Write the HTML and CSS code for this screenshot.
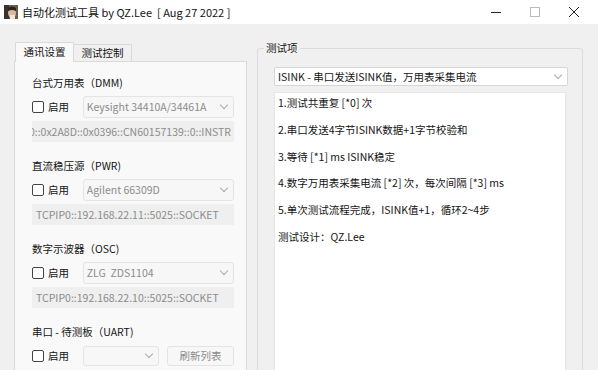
FILE: index.html
```html
<!DOCTYPE html>
<html lang="zh-CN">
<head>
    <meta charset="UTF-8">
    <title>自动化测试工具 by QZ.Lee</title>
    <link rel="stylesheet" href="styles.css">
</head>
<body>
    <div class="window">
        <!-- Title bar -->
        <div class="titlebar">
            <svg class="app-icon" width="14" height="14" viewBox="0 0 14 14">
                <rect width="14" height="14" fill="#6b5a4e"/>
                <rect x="0" y="0" width="5" height="14" fill="#3b302a"/>
                <ellipse cx="8" cy="8" rx="4" ry="5" fill="#d9b9a0"/>
                <path d="M4 3 Q8 0 12 3 L12 6 Q8 4 4 6 Z" fill="#2a221d"/>
                <rect x="6" y="10" width="5" height="4" fill="#f2e6dc"/>
            </svg>
            <span class="title">自动化测试工具 by QZ.Lee&nbsp;&nbsp;[ Aug 27 2022 ]</span>
            <div class="win-buttons">
                <span class="win-btn">
                    <svg width="10" height="10" viewBox="0 0 10 10"><line x1="0" y1="5.5" x2="10" y2="5.5" stroke="#222" stroke-width="1"/></svg>
                </span>
                <span class="win-btn">
                    <svg width="10" height="10" viewBox="0 0 10 10"><rect x="0.5" y="0.5" width="9" height="9" fill="none" stroke="#bbb" stroke-width="1"/></svg>
                </span>
                <span class="win-btn">
                    <svg width="10" height="10" viewBox="0 0 10 10"><path d="M0 0 L10 10 M10 0 L0 10" stroke="#222" stroke-width="1"/></svg>
                </span>
            </div>
        </div>

        <div class="main">
            <!-- Left: tabs -->
            <div class="left">
                <div class="tabs">
                    <span class="tab active">通讯设置</span>
                    <span class="tab">测试控制</span>
                </div>
                <div class="tab-panel">
                    <div class="section">
                        <div class="section-label">台式万用表（DMM)</div>
                        <div class="row">
                            <label class="check"><span class="box"></span>启用</label>
                            <div class="combo wide"><span>Keysight 34410A/34461A</span><i class="chev"></i></div>
                        </div>
                        <div class="address scrolled"><span>USB0::0x2A8D::0x0396::CN60157139::0::INSTR</span></div>
                    </div>
                    <div class="section">
                        <div class="section-label">直流稳压源（PWR)</div>
                        <div class="row">
                            <label class="check"><span class="box"></span>启用</label>
                            <div class="combo wide"><span>Agilent 66309D</span><i class="chev"></i></div>
                        </div>
                        <div class="address"><span>TCPIP0::192.168.22.11::5025::SOCKET</span></div>
                    </div>
                    <div class="section">
                        <div class="section-label">数字示波器（OSC)</div>
                        <div class="row">
                            <label class="check"><span class="box"></span>启用</label>
                            <div class="combo wide"><span>ZLG&nbsp; ZDS1104</span><i class="chev"></i></div>
                        </div>
                        <div class="address"><span>TCPIP0::192.168.22.10::5025::SOCKET</span></div>
                    </div>
                    <div class="section">
                        <div class="section-label">串口 - 待测板（UART)</div>
                        <div class="row">
                            <label class="check"><span class="box"></span>启用</label>
                            <div class="combo small"><span></span><i class="chev"></i></div>
                            <span class="refresh">刷新列表</span>
                        </div>
                    </div>
                </div>
            </div>

            <!-- Right: test items -->
            <div class="right">
                <div class="group">
                    <span class="group-title">测试项</span>
                    <div class="combo test-select"><span>ISINK - 串口发送ISINK值，万用表采集电流</span><i class="chev"></i></div>
                    <div class="description">
                        <p>1.测试共重复 [*0] 次</p>
                        <p>2.串口发送4字节ISINK数据+1字节校验和</p>
                        <p>3.等待 [*1] ms ISINK稳定</p>
                        <p>4.数字万用表采集电流 [*2] 次，每次间隔 [*3] ms</p>
                        <p>5.单次测试流程完成，ISINK值+1，循环2~4步</p>
                        <p>测试设计：QZ.Lee</p>
                    </div>
                </div>
            </div>
        </div>
    </div>
</body>
</html>
```

FILE: styles.css
```css
body {
    margin: 0;
    font-family: "Noto Sans CJK SC", sans-serif;
    font-size: 10.5px;
    color: #141414;
}

.window {
    width: 598px;
    height: 370px;
    overflow: hidden;
    background-color: #f0f0f0;
}

/* Title bar */
.titlebar {
    height: 24px;
    background-color: #ffffff;
    display: flex;
    align-items: center;
    padding-left: 4px;
}

.app-icon {
    margin-right: 4px;
}

.title {
    font-size: 11px;
    line-height: 16px;
    color: #111;
}

.win-buttons {
    margin-left: auto;
    display: flex;
    margin-right: 5px;
}

.win-btn {
    width: 39px;
    height: 24px;
    display: flex;
    align-items: center;
    justify-content: center;
}

/* Layout */
.main {
    display: flex;
    padding-top: 17px;
}

.left {
    margin-left: 14px;
    width: 233px;
}

.tabs {
    display: flex;
    align-items: flex-end;
    height: 20px;
    margin-left: 1px;
}

.tab {
    box-sizing: border-box;
    width: 58px;
    height: 17px;
    line-height: 16px;
    text-align: center;
    white-space: nowrap;
    border: 1px solid #dadada;
    border-bottom: none;
    background-color: #f0f0f0;
}

.tab.active {
    width: 59px;
    height: 20px;
    line-height: 18px;
    background-color: #f9f9f9;
    position: relative;
    z-index: 1;
    margin-bottom: -1px;
}

.tab + .tab {
    border-left: none;
}

.tab-panel {
    background-color: #f9f9f9;
    border: 1px solid #dadada;
    height: 320px;
    padding: 13px 12px 0 17px;
}

.section {
    margin-bottom: 16px;
}

.section-label {
    height: 16px;
    line-height: 16px;
    margin-bottom: 5px;
}

.row {
    display: flex;
    align-items: center;
    height: 22px;
    margin-bottom: 3px;
}

.check {
    display: flex;
    align-items: center;
    width: 51px;
    line-height: 16px;
}

.box {
    width: 10px;
    height: 10px;
    border: 1px solid #444;
    border-radius: 2px;
    margin-right: 4px;
    background-color: #fff;
}

.combo {
    height: 20px;
    border: 1px solid #e4e4e4;
    border-radius: 3px;
    background-color: #f7f7f7;
    color: #8c8c8c;
    display: flex;
    align-items: center;
    padding-left: 3px;
    line-height: 16px;
}

.combo span {
    flex: 1;
    white-space: nowrap;
    overflow: hidden;
}

.combo.wide {
    width: 147px;
}

.combo.small {
    width: 71px;
    height: 18px;
}

.chev {
    width: 5px;
    height: 5px;
    border-right: 1px solid #aaa;
    border-bottom: 1px solid #aaa;
    transform: rotate(45deg);
    margin: 0 6px 4px 0;
}

.refresh {
    width: 65px;
    height: 18px;
    line-height: 18px;
    margin-left: 8px;
    text-align: center;
    border: 1px solid #e4e4e4;
    border-radius: 3px;
    background-color: #f7f7f7;
    color: #8c8c8c;
}

.address {
    height: 21px;
    line-height: 21px;
    width: 198px;
    padding-left: 4px;
    background-color: #efefef;
    color: #8c8c8c;
    display: flex;
    overflow: hidden;
    white-space: nowrap;
}

.address span {
    flex-shrink: 0;
}

.address.scrolled {
    justify-content: flex-end;
    padding: 0 3px 0 0;
    width: 199px;
}

/* Right group */
.right {
    margin-left: 10px;
    padding-top: 7px;
}

.group {
    position: relative;
    width: 308px;
    height: 340px;
    border: 1px solid #dcdcdc;
    border-radius: 3px;
    padding: 18px 0 0 16px;
}

.group-title {
    position: absolute;
    top: -9px;
    left: 6px;
    padding: 0 2px;
    background-color: #f0f0f0;
    line-height: 16px;
}

.test-select {
    width: 289px;
    height: 17px;
    background-color: #ffffff;
    border-color: #d6d6d6;
    color: #141414;
    border-radius: 2px;
}

.description {
    margin-top: 6px;
    width: 287px;
    height: 300px;
    background-color: #ffffff;
    border: 1px solid #e6e6e6;
    padding: 3px 0 0 3px;
}

.description p {
    margin: 0 0 13.4px 0;
    line-height: 13.4px;
    white-space: nowrap;
}
```
